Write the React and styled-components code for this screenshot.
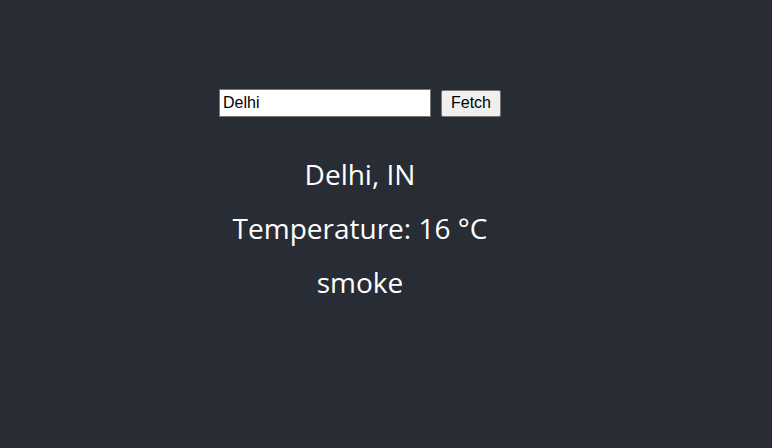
import styled, { createGlobalStyle } from "styled-components";

const GlobalStyle = createGlobalStyle`
  html, body {
    margin: 0;
    background: #282c34;
  }
  body {
    min-height: 100vh;
  }
`;

const Page = styled.div`
  width: 720px;
  padding-top: 89px;
  display: flex;
  flex-direction: column;
  align-items: center;
  color: #ffffff;
`;

const SearchRow = styled.form`
  display: flex;
  align-items: center;
  gap: 10px;
`;

const CityInput = styled.input`
  box-sizing: border-box;
  width: 212px;
  height: 28px;
  padding: 1px 3px;
  border: 1px solid #767676;
  background: #ffffff;
  color: #000000;
  font-family: "Liberation Sans", Arial, sans-serif;
  font-size: 16px;
  outline: none;
`;

const FetchButton = styled.button`
  box-sizing: border-box;
  height: 27px;
  padding: 0 9px;
  border: 1px solid #767676;
  border-radius: 2px;
  background: #efefef;
  color: #000000;
  font-family: "Liberation Sans", Arial, sans-serif;
  font-size: 16px;
`;

const Weather = styled.div`
  margin-top: 30px;
  display: flex;
  flex-direction: column;
  align-items: center;
`;

const Line = styled.div`
  height: 54px;
  line-height: 54px;
  font-family: "Open Sans", "Noto Sans", sans-serif;
  font-size: 28px;
`;

export default function App() {
  return (
    <>
      <GlobalStyle />
      <Page>
        <SearchRow onSubmit={(e) => e.preventDefault()}>
          <CityInput defaultValue="Delhi" />
          <FetchButton type="submit">Fetch</FetchButton>
        </SearchRow>
        <Weather>
          <Line>Delhi, IN</Line>
          <Line>Temperature: 16 °C</Line>
          <Line>smoke</Line>
        </Weather>
      </Page>
    </>
  );
}
